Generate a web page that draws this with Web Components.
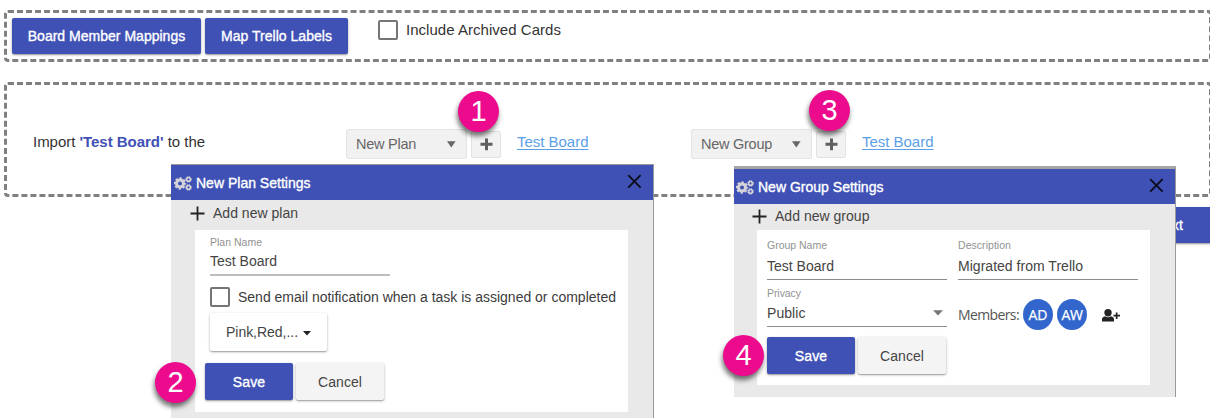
<!DOCTYPE html>
<html lang="en">
<head>
<meta charset="utf-8">
<title>Import board</title>
<style>
html,body{margin:0;height:418px;overflow:hidden;background:#fff}
body{font:14px/20px "Liberation Sans",Arial,sans-serif;color:#333;position:relative}
</style>
</head>
<body>
<import-page></import-page>
<script>
const define = (name, html, setup) => {
  const template = document.createElement('template');
  template.innerHTML = html;
  customElements.define(name, class extends HTMLElement {
    connectedCallback() {
      if (this.shadowRoot) return;
      this.attachShadow({mode: 'open'}).append(template.content.cloneNode(true));
      if (setup) setup(this, this.shadowRoot);
    }
  });
};

/* Text run; the "w" attribute sets the width its letters are tracked to. */
define('ui-text', `<style>:host{display:inline-block;white-space:nowrap;flex:none}</style><slot></slot>`, el => {
  const w = parseFloat(el.getAttribute('w'));
  if (!w) return;
  const natural = el.getBoundingClientRect().width;
  const n = el.textContent.length;
  el.style.letterSpacing = ((w - natural) / n).toFixed(3) + 'px';
});

define('ui-button', `<style>
:host{display:flex;align-items:center;justify-content:center;box-sizing:border-box;flex:none;height:36px;border-radius:2px;
background:#f4f4f4;color:#444;box-shadow:0 1px 3px rgba(0,0,0,.28),0 1px 1px rgba(0,0,0,.18)}
:host([primary]){background:#3f51b5;color:#fff;-webkit-text-stroke:.35px #fff}
</style><slot></slot>`);

define('ui-check', `<style>
:host{display:flex;align-items:center;gap:8px;color:#333}
i{box-sizing:border-box;width:20px;height:20px;border:2px solid #757575;border-radius:2px;flex:none;background:#fff}
</style><i></i><slot></slot>`);

define('ui-select', `<style>
:host{display:flex;box-sizing:border-box;align-items:center;justify-content:space-between;width:121px;height:30px;padding:0 10px 0 9px;
border:1px solid #e4e4e4;border-radius:2px;background:#f1f1f1;color:#666;font-size:14.5px;flex:none}
svg{display:block}
</style><slot></slot><svg width="9" height="7" viewBox="0 0 9 7"><path d="M0 .3h8.6L4.3 6.6z" fill="#666"/></svg>`);

define('plus-button', `<style>
:host{display:flex;box-sizing:border-box;align-items:center;justify-content:center;width:30px;height:27px;
border:1px solid #e2e2e2;border-radius:2px;background:#f2f2f2;flex:none}
svg{display:block}
</style><svg width="13" height="13" viewBox="0 0 13 13"><path d="M5 .5h3v4.3h4.5v3H8v4.4H5V7.800H.5v-3H5z" fill="#5f5f5f"/></svg>`);

define('ui-link', `<style>:host{display:inline-block;color:#5b9fe8;font-size:15px;line-height:18px}
::slotted(ui-text){text-decoration:underline;text-decoration-thickness:1px;text-underline-offset:2px}</style><slot></slot>`);

define('dashed-panel', `<style>
:host{display:flex;box-sizing:border-box;width:1208px;border:3px dashed #808080;border-radius:4px}
</style><slot></slot>`);

define('step-badge', `<style>
:host{position:absolute;z-index:5;display:flex;align-items:center;justify-content:center;width:41px;height:41px;border-radius:50%;
background:#ec0a8d;color:#fff;font-size:29px;line-height:41px;box-shadow:-1px 4px 5px rgba(0,0,0,.55)}
</style><slot></slot>`);

define('gears-icon', `<style>:host{display:block;flex:none}svg{display:block}</style>
<svg width="18" height="15" viewBox="0 0 18 15" fill="none" stroke="#d4d4d8">
<circle cx="6" cy="7.500" r="3.500" stroke-width="3"/>
<circle cx="6" cy="7.500" r="5.200" stroke-width="1.900" stroke-dasharray="2.400 1.684" stroke-dashoffset="1.200"/>
<circle cx="14.500" cy="3.400" r="1.900" stroke-width="1.600"/><circle cx="14.500" cy="3.400" r="2.800" stroke-width="1" stroke-dasharray="1.300 .9"/>
<circle cx="14.500" cy="11.400" r="1.900" stroke-width="1.600"/><circle cx="14.500" cy="11.400" r="2.800" stroke-width="1" stroke-dasharray="1.300 .9"/>
</svg>`);

define('settings-dialog', `<style>
:host{position:absolute;display:flex;flex-direction:column;box-sizing:border-box;background:#e9e9e9;border-right:1px solid #999;z-index:2}
header{display:flex;box-sizing:border-box;align-items:center;height:35px;gap:4px;padding:1px 11px 0 var(--head-x);background:#3f51b5;color:#fff;flex:none;-webkit-text-stroke:.35px #fff}
.x{margin-left:auto;margin-top:-3px;display:block}
.add{display:flex;align-items:center;gap:8px;box-sizing:border-box;color:#444;height:var(--add-h);padding-left:var(--add-x);padding-bottom:var(--add-b);flex:none}
.add ::slotted(*){margin-top:-1px}
main{display:block;background:#fff;box-sizing:border-box;margin:0 25px 0 var(--card-x);height:var(--card-h)}
svg{flex:none}
</style>
<header><gears-icon></gears-icon><slot name="title"></slot>
<svg class="x" width="15" height="15" viewBox="0 0 15 15"><path d="M1.200 1.200l12.400 12.400M13.600 1.200L1.200 13.600" stroke="#0b0d1c" stroke-width="1.900"/></svg></header>
<div class="add"><svg width="15" height="15" viewBox="0 0 15 15"><path d="M7.500.5v14M.5 7.500h14" stroke="#222" stroke-width="1.800"/></svg><slot name="add"></slot></div>
<main><slot></slot></main>`);

define('text-field', `<style>
:host{display:block;box-sizing:border-box;width:180px;border-bottom:1px solid #8c8c8c;height:var(--field-h,41px);color:#444}
.l{font-size:10.5px;line-height:12px;height:14px;color:#929292}
.v{display:flex;justify-content:space-between;align-items:center;line-height:20px;height:20px;padding-top:var(--value-gap,3px)}
svg{display:none;margin-right:4px}
:host([menu]) svg{display:block}
</style><div class="l"><slot name="label"></slot></div><div class="v"><slot></slot><svg width="10" height="6" viewBox="0 0 10 6"><path d="M0 .3h10L5 5.500z" fill="#777"/></svg></div>`);

define('member-chip', `<style>
:host{display:flex;align-items:center;justify-content:center;width:30px;height:31px;border-radius:50%;background:#3366cc;color:#fff;
font:14px/20px "Open Sans","Noto Sans",sans-serif;-webkit-text-stroke:.25px #fff;flex:none}
</style><slot></slot>`);

define('import-page', `<style>
:host{display:block;position:relative;width:1210px;height:418px;overflow:hidden}
.page{display:flex;flex-direction:column;padding:10px 0 0 4px;width:1220px}
.top{height:52px;padding:5px 0 0 5px;gap:4px;align-items:flex-start}
.top ui-check{margin:2px 0 0 26px;font-size:15px}
.imp{height:115px;margin-top:20px;padding:44px 0 0 26px;align-items:flex-start}
.cell{display:flex;gap:4px;align-items:center}
.c0{width:313px;padding-top:3px;font-size:15px}
.c1{width:345px}
.cell ui-link{margin:-4px 0 0 12px}
b{color:#3f51b5}
.next{margin:10px 0 0 1126px;width:90px;justify-content:flex-end;padding-right:37px;box-sizing:border-box}
.d1{left:171px;top:164px;width:483px;height:260px;border-top:1px solid #9a9a9a;--head-x:3px;--add-h:30px;--add-x:19px;--add-b:3px;--card-x:24px;--card-h:182px}
.d2{left:734px;top:166px;width:442px;height:231px;border-top:3px solid #a5a5a5;--head-x:2px;--add-h:26px;--add-x:18px;--add-b:2px;--card-x:23px;--card-h:155px}
.f1{display:flex;flex-direction:column;align-items:flex-start;padding:6px 0 0 15px}
.f1 text-field{--field-h:40px;--value-gap:1px;border-bottom:2px solid #bdbdbd;margin-bottom:11px}
.f1 ui-check{color:#3c3c3c}
.combo{width:117px;height:38px;background:#fff;margin-top:6px;gap:5px}
.combo svg{margin-top:3px}
.acts{display:flex;gap:3px}
.f1 .acts{margin:12px 0 0 -5px}
.acts ui-button{width:88px;height:37px}
.f2{display:grid;grid-template-columns:180px 180px;column-gap:11px;padding:9px 0 0 10px;align-items:start}
.f2>.privacy{margin-top:7px;--field-h:40px;--value-gap:2px}
.mem{display:flex;align-items:center;gap:4px;height:31px;padding-top:13px;margin:6px 0 -4px}
.mem>ui-text{font:14px/20px "Open Sans","Noto Sans",sans-serif;color:#555}
.person{margin-left:11px;margin-top:2px}
.f2 .acts{margin-top:10px}
</style>
<div class="page">
<dashed-panel class="top">
<ui-button primary style="width:189px"><ui-text w="157.5">Board Member Mappings</ui-text></ui-button>
<ui-button primary style="width:143px"><ui-text w="111">Map Trello Labels</ui-text></ui-button>
<ui-check><ui-text w="155">Include Archived Cards</ui-text></ui-check>
</dashed-panel>
<dashed-panel class="imp">
<div class="cell c0"><ui-text w="172">Import <b>'Test Board'</b> to the</ui-text></div>
<div class="cell c1"><ui-select><ui-text w="60">New Plan</ui-text></ui-select><plus-button></plus-button><ui-link><ui-text w="71.5">Test Board</ui-text></ui-link></div>
<div class="cell"><ui-select><ui-text w="71">New Group</ui-text></ui-select><plus-button></plus-button><ui-link><ui-text w="71.5">Test Board</ui-text></ui-link></div>
</dashed-panel>
<ui-button primary class="next"><ui-text>Next</ui-text></ui-button>
</div>
<settings-dialog class="d1">
<ui-text slot="title" w="114.5">New Plan Settings</ui-text><ui-text slot="add" w="85">Add new plan</ui-text>
<div class="f1">
<text-field><ui-text slot="label" w="52">Plan Name</ui-text><ui-text w="67">Test Board</ui-text></text-field>
<ui-check><ui-text w="378">Send email notification when a task is assigned or completed</ui-text></ui-check>
<ui-button class="combo"><ui-text w="72">Pink,Red,...</ui-text><svg width="8" height="5" viewBox="0 0 8 5"><path d="M0 0h8L4 4.600z" fill="#222"/></svg></ui-button>
<div class="acts"><ui-button primary><ui-text w="32.5">Save</ui-text></ui-button><ui-button><ui-text w="44">Cancel</ui-text></ui-button></div>
</div>
</settings-dialog>
<settings-dialog class="d2">
<ui-text slot="title" w="125.500">New Group Settings</ui-text><ui-text slot="add" w="94.5">Add new group</ui-text>
<div class="f2">
<text-field><ui-text slot="label" w="60">Group Name</ui-text><ui-text w="67">Test Board</ui-text></text-field>
<text-field><ui-text slot="label" w="53">Description</ui-text><ui-text w="125">Migrated from Trello</ui-text></text-field>
<text-field menu class="privacy"><ui-text slot="label" w="34">Privacy</ui-text><ui-text w="38.5">Public</ui-text></text-field>
<div class="mem"><ui-text w="61">Members:</ui-text><member-chip><ui-text w="19">AD</ui-text></member-chip><member-chip><ui-text w="21">AW</ui-text></member-chip>
<svg class="person" width="18" height="13" viewBox="0 0 18 13"><path d="M6 0A3.700 3.700 0 0 1 9.700 3.700Q9.500 7.300 6 7.400Q2.500 7.300 2.300 3.700A3.700 3.700 0 0 1 6 0zM0 12.500V10.500Q0 8 3 7.300Q6 9.200 9 7.300Q12 8 12 10.500V12.500zM13.800 3.500h1.700V5.800H18v1.700h-2.500V10h-1.700V7.500h-2.300V5.800h2.300z" fill="#222"/></svg></div>
<div class="acts"><ui-button primary><ui-text w="32.5">Save</ui-text></ui-button><ui-button><ui-text w="44">Cancel</ui-text></ui-button></div>
</div>
</settings-dialog>
<step-badge style="left:458px;top:91px">1</step-badge>
<step-badge style="left:155px;top:362px">2</step-badge>
<step-badge style="left:809px;top:90px">3</step-badge>
<step-badge style="left:723px;top:335px">4</step-badge>`);
</script>
</body>
</html>
